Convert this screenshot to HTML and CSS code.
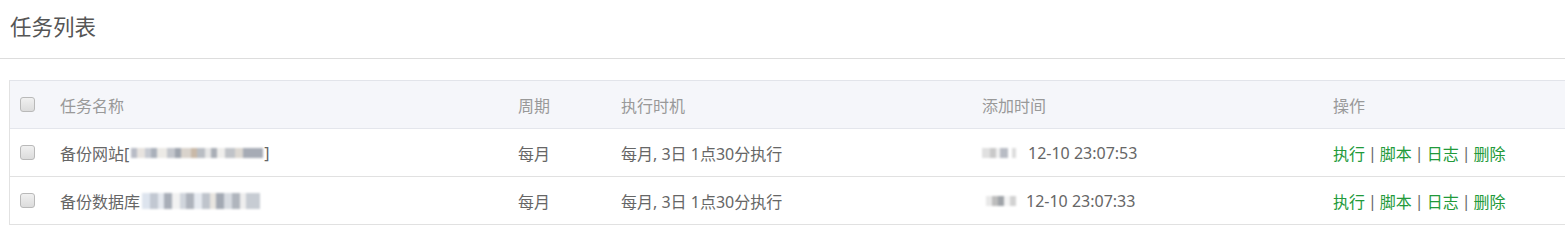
FILE: index.html
```html
<!DOCTYPE html>
<html lang="zh-CN">
<head>
<meta charset="utf-8">
<title>任务列表</title>
<link rel="stylesheet" href="styles.css">
</head>
<body>
<div class="page-title">任务列表</div>
<div class="table">
  <div class="row head">
    <div class="cell"><span class="cb"></span></div>
    <div class="cell">任务名称</div>
    <div class="cell">周期</div>
    <div class="cell">执行时机</div>
    <div class="cell">添加时间</div>
    <div class="cell">操作</div>
  </div>
  <div class="row">
    <div class="cell"><span class="cb"></span></div>
    <div class="cell">备份网站[<span class="blur blur-a"></span>]</div>
    <div class="cell">每月</div>
    <div class="cell">每月, 3日 1点30分执行</div>
    <div class="cell"><span class="blur blur-c"></span><span class="ts">12-10 23:07:53</span></div>
    <div class="cell ops"><a>执行</a><span class="sep">|</span><a>脚本</a><span class="sep">|</span><a>日志</a><span class="sep">|</span><a>删除</a></div>
  </div>
  <div class="row">
    <div class="cell"><span class="cb"></span></div>
    <div class="cell">备份数据库<span class="blur blur-b"></span></div>
    <div class="cell">每月</div>
    <div class="cell">每月, 3日 1点30分执行</div>
    <div class="cell"><span class="blur blur-d"></span><span class="ts">12-10 23:07:33</span></div>
    <div class="cell ops"><a>执行</a><span class="sep">|</span><a>脚本</a><span class="sep">|</span><a>日志</a><span class="sep">|</span><a>删除</a></div>
  </div>
</div>
</body>
</html>
```
FILE: styles.css
```css
html, body {
  margin: 0;
  padding: 0;
  background: #fff;
  overflow: hidden;
}
body {
  font-family: "Noto Sans", "Noto Sans CJK SC", sans-serif;
  color: #666;
}
.page-title {
  height: 58px;
  line-height: 54px;
  padding-left: 10px;
  font-size: 21.5px;
  color: #555;
  border-bottom: 1px solid #ddd;
}
.table {
  margin: 21px 0 0 9px;
  width: 1600px;
  border-top: 1px solid #e2e4ea;
  border-left: 1px solid #e2e2e2;
}
.row {
  display: grid;
  grid-template-columns: 38px 458px 103px 361px 351px 1fr;
  height: 47px;
  border-bottom: 1px solid #e1e1e1;
  font-size: 16px;
  color: #666;
}
.row.head {
  background: #f5f6fa;
  color: #999;
  border-bottom-color: #e4e6ec;
}
.cell {
  display: flex;
  align-items: center;
  padding-left: 12px;
  white-space: nowrap;
}
.cell:first-child {
  padding-left: 10px;
}
.cb {
  display: inline-block;
  width: 13px;
  height: 13px;
  border: 1px solid #b9b9b9;
  border-radius: 3px;
  background: linear-gradient(#f0f0f0, #dcdcdc);
}
.ops a {
  color: #229a3a;
  text-decoration: none;
}
.sep {
  color: #666;
  margin: 0 3px;
}
.blur {
  display: inline-block;
  height: 10px;
  filter: blur(1px);
}
.blur-a {
  width: 132px;
  margin-left: 2px;
  margin-right: 1px;
  background: linear-gradient(90deg,
    #b8bcc6 0 6px, #e7e3df 6px 14px, #c6cad2 14px 20px, #aab0ba 20px 26px,
    #eceae6 26px 36px, #c3c6cc 36px 44px, #9ea4ae 44px 50px, #d9d3cc 50px 60px,
    #c9b9a8 60px 66px, #b9bdc3 66px 74px, #e6e6e6 74px 80px, #a9aeb6 80px 86px,
    #efeeec 86px 94px, #c0c3c8 94px 104px, #dcd8d2 104px 112px, #a6abb5 112px 132px);
}
.blur-b {
  width: 118px;
  height: 16px;
  margin-left: 2px;
  background: linear-gradient(90deg,
    #dde4ee 0 8px, #c2c8d2 8px 16px, #e4e8ee 16px 22px, #a8aeb8 22px 30px,
    #f2f2f2 30px 38px, #d0d5dc 38px 44px, #aeb3bc 44px 52px, #e6eaf0 52px 60px,
    #bfc4cc 60px 68px, #e8e5e0 68px 74px, #a3a9b3 74px 82px, #d7dbe1 82px 90px,
    #b0b5bd 90px 98px, #eeeeee 98px 104px, #c7ccd3 104px 118px);
}
.blur-c {
  width: 34px;
  margin-right: 12px;
  background: linear-gradient(90deg,
    #e0e0e0 0 8px, #c9c9c9 8px 14px, #f0f0f0 14px 18px, #b8bcc4 18px 26px,
    #ffffff 26px 30px, #dcdcdc 30px 34px);
}
.blur-d {
  width: 36px;
  margin-left: 4px;
  margin-right: 4px;
  background: linear-gradient(90deg,
    #e8e8e8 0 6px, #bdbdbd 6px 12px, #9fa3a8 12px 18px, #f4f4f4 18px 24px,
    #d2d2d2 24px 30px, #ffffff 30px 36px);
}
.ts {
  color: #666;
}
```
